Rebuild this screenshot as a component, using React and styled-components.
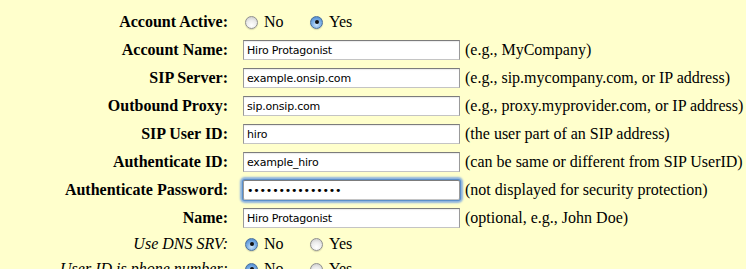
import { createGlobalStyle } from "styled-components";
import styled from "styled-components";

const GlobalStyle = createGlobalStyle`
  html, body {
    margin: 0;
    padding: 0;
    background: #ffffcc;
  }
  body {
    font-family: "Liberation Serif", "Times New Roman", serif;
    color: #000;
    overflow: hidden;
  }
`;

const Form = styled.div`
  display: grid;
  grid-template-columns: 243px 217px auto;
  padding-top: 8px;
  align-items: center;
`;

const Label = styled.div`
  box-sizing: border-box;
  height: ${(p) => p.h}px;
  padding-right: 15px;
  display: flex;
  align-items: center;
  justify-content: flex-end;
  font-size: 16px;
  font-weight: ${(p) => (p.optional ? "normal" : "bold")};
  font-style: ${(p) => (p.optional ? "italic" : "normal")};
  white-space: nowrap;
`;

const Field = styled.div`
  height: ${(p) => p.h}px;
  display: flex;
  align-items: center;
  grid-column: ${(p) => (p.wide ? "2 / 4" : "auto")};
`;

const TextInput = styled.input`
  box-sizing: border-box;
  width: 217px;
  height: 20px;
  margin: 0;
  padding: 0 3px;
  line-height: 18px;
  border: 1px solid #9a9a9a;
  border-top-color: #7c7c7c;
  border-bottom-color: #c4c4c4;
  background: #fff;
  font-family: "DejaVu Sans", Verdana, sans-serif;
  font-size: 11px;
  color: #000;
  outline: none;
  box-shadow: ${(p) =>
    p.focused ? "0 0 0 1px #5b8fc9, 0 0 2px 3px #8db3df" : "inset 0 1px 1px rgba(0,0,0,0.08)"};
  border-radius: ${(p) => (p.focused ? "2px" : "0")};
  letter-spacing: ${(p) => (p.type === "password" ? "-0.2px" : "-0.2px")};
`;

const Hint = styled.div`
  font-size: 16px;
  white-space: nowrap;
  padding-left: 5px;
`;

const RadioGroup = styled.div`
  display: flex;
  align-items: center;
  padding-left: 2px;
`;

const RadioOption = styled.label`
  display: flex;
  align-items: center;
  font-size: 16px;
  width: ${(p) => p.w}px;
`;

const Radio = styled.span`
  box-sizing: border-box;
  display: inline-block;
  width: 13px;
  height: 13px;
  border-radius: 50%;
  margin-right: 6px;
  position: relative;
  border: 1px solid ${(p) => (p.checked ? "#4a6f9c" : "#8f8f8f")};
  background: ${(p) =>
    p.checked
      ? "radial-gradient(circle at 50% 70%, #cfe6fb 0%, #7fb2e8 45%, #3f7fc9 100%)"
      : "radial-gradient(circle at 50% 75%, #ffffff 0%, #ececec 50%, #c4c4c4 100%)"};
  box-shadow: 0 1px 1px rgba(0, 0, 0, 0.15);

  &::after {
    content: "";
    display: ${(p) => (p.checked ? "block" : "none")};
    position: absolute;
    left: 3.5px;
    top: 3.5px;
    width: 4px;
    height: 4px;
    border-radius: 50%;
    background: #111;
  }
`;

function RadioRow({ value }) {
  return (
    <RadioGroup>
      <RadioOption w={65}>
        <Radio checked={value === "no"} />
        No
      </RadioOption>
      <RadioOption w={50}>
        <Radio checked={value === "yes"} />
        Yes
      </RadioOption>
    </RadioGroup>
  );
}

const rows = [
  { label: "Account Name:", value: "Hiro Protagonist", hint: "(e.g., MyCompany)" },
  { label: "SIP Server:", value: "example.onsip.com", hint: "(e.g., sip.mycompany.com, or IP address)" },
  { label: "Outbound Proxy:", value: "sip.onsip.com", hint: "(e.g., proxy.myprovider.com, or IP address)" },
  { label: "SIP User ID:", value: "hiro", hint: "(the user part of an SIP address)" },
  { label: "Authenticate ID:", value: "example_hiro", hint: "(can be same or different from SIP UserID)" },
  { label: "Authenticate Password:", value: "passwordsecret1", hint: "(not displayed for security protection)", password: true },
  { label: "Name:", value: "Hiro Protagonist", hint: "(optional, e.g., John Doe)" },
];

export default function App() {
  return (
    <>
      <GlobalStyle />
      <Form>
        <Label h={28}>Account Active:</Label>
        <Field h={28} wide>
          <RadioRow value="yes" />
        </Field>

        {rows.map((r) => (
          <>
            <Label h={28} key={r.label}>{r.label}</Label>
            <Field h={28}>
              <TextInput
                type={r.password ? "password" : "text"}
                defaultValue={r.value}
                focused={r.password}
              />
            </Field>
            <Hint>{r.hint}</Hint>
          </>
        ))}

        <Label h={24} optional>Use DNS SRV:</Label>
        <Field h={24} wide>
          <RadioRow value="no" />
        </Field>

        <Label h={26} optional>User ID is phone number:</Label>
        <Field h={26} wide>
          <RadioRow value="no" />
        </Field>
      </Form>
    </>
  );
}
